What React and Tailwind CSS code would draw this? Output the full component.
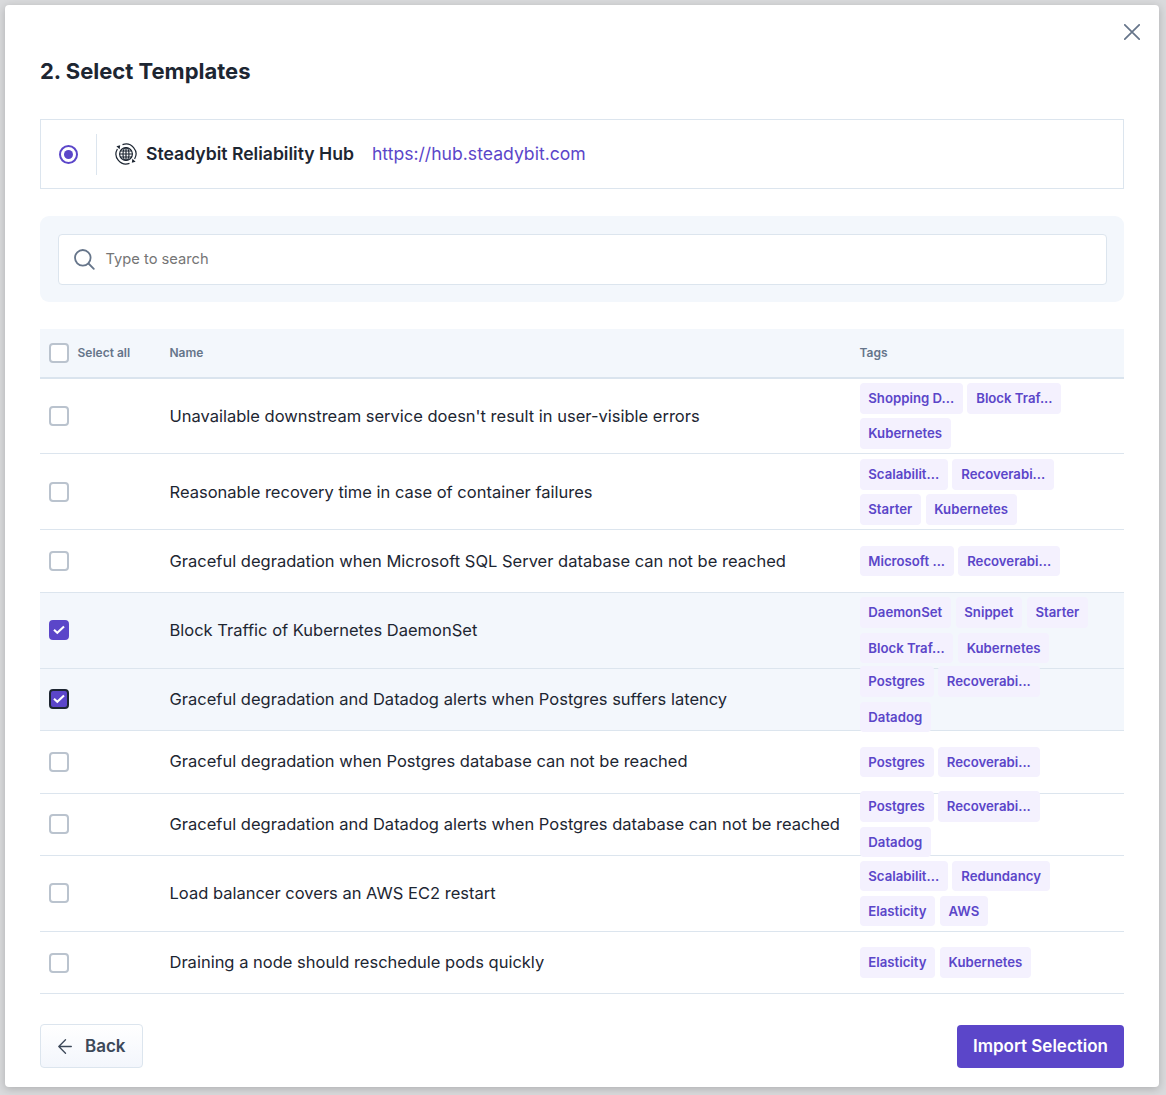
import React from "react";

const rows = [
  { name: "Unavailable downstream service doesn't result in user-visible errors", tags: ["Shopping D...", "Block Traf...", "Kubernetes"], h: "h-[75.8px]" },
  { name: "Reasonable recovery time in case of container failures", tags: ["Scalabilit...", "Recoverabi...", "Starter", "Kubernetes"], h: "h-[75.8px]" },
  { name: "Graceful degradation when Microsoft SQL Server database can not be reached", tags: ["Microsoft ...", "Recoverabi..."], h: "h-[62.5px]" },
  { name: "Block Traffic of Kubernetes DaemonSet", tags: ["DaemonSet", "Snippet", "Starter", "Block Traf...", "Kubernetes"], h: "h-[75.8px]", checked: true },
  { name: "Graceful degradation and Datadog alerts when Postgres suffers latency", tags: ["Postgres", "Recoverabi...", "Datadog"], h: "h-[62.5px]", checked: true, focused: true },
  { name: "Graceful degradation when Postgres database can not be reached", tags: ["Postgres", "Recoverabi..."], h: "h-[62.5px]" },
  { name: "Graceful degradation and Datadog alerts when Postgres database can not be reached", tags: ["Postgres", "Recoverabi...", "Datadog"], h: "h-[62.5px]" },
  { name: "Load balancer covers an AWS EC2 restart", tags: ["Scalabilit...", "Redundancy", "Elasticity", "AWS"], h: "h-[75.8px]" },
  { name: "Draining a node should reschedule pods quickly", tags: ["Elasticity", "Kubernetes"], h: "h-[62.5px]" },
];

function Checkbox({ checked, focused }) {
  if (!checked) return <span className="block h-5 w-5 shrink-0 rounded-[4px] border-2 border-[#bac3ce] bg-white" />;
  return (
    <span className={"flex h-5 w-5 shrink-0 items-center justify-center rounded-[4px] border-2 bg-[#5b46c9] " + (focused ? "border-[#1d2632]" : "border-[#5b46c9]")}>
      <svg width="12" height="10" viewBox="0 0 12 10" fill="none" stroke="white" strokeWidth="2.1">
        <path d="M1 4.8 4.3 7.8 11 1.6" />
      </svg>
    </span>
  );
}

function HubIcon() {
  return (
    <svg width="22" height="22" viewBox="0 0 22 22" fill="none" stroke="#1d2632" strokeWidth="1.2">
      <circle cx="11" cy="11" r="6.4" />
      <ellipse cx="11" cy="11" rx="3" ry="6.4" />
      <path d="M11 4.6v12.8M4.6 11h12.8M5.5 8h11M5.5 14h11" />
      <path d="M7.5 1.6A10 10 0 0 1 19.6 16M14.5 20.4A10 10 0 0 1 2.4 6" />
      <path d="M1.4 3.2 5.2 2.2 4.6 6.2ZM20.6 18.8 16.8 19.8 17.4 15.8Z" fill="#1d2632" stroke="none" />
    </svg>
  );
}

export default function App() {
  return (
    <div className="flex h-[1095px] w-[1166px] overflow-hidden bg-[#d9dadc] pl-[5px] pt-[5px] font-['Inter',sans-serif] text-[#1d2632]">
      <main className="relative h-[1082px] w-[1154px] shrink-0 rounded-[4px] bg-white px-[35px] shadow-[0_2px_8px_rgba(0,0,0,0.2)]">
        <button className="absolute right-[19px] top-[19px]">
          <svg className="block" width="16" height="16" viewBox="0 0 16 16" stroke="#66758a" strokeWidth="1.7" strokeLinecap="round"><path d="M.8.8 15.2 15.2M15.2.8.8 15.2" /></svg>
        </button>
        <h1 className="pt-[51px] text-[22px] font-bold leading-[30px]">2. Select Templates</h1>
        <section className="mt-[33px] flex h-[70px] w-[1084px] items-center border border-[#dce5ee] pl-[18px]">
          <span className="flex h-[19px] w-[19px] items-center justify-center rounded-full border-2 border-[#5b46c9]"><span className="h-[9px] w-[9px] rounded-full bg-[#5b46c9]" /></span>
          <span className="ml-[18px] mr-[18px] h-[41px] w-px bg-[#dce5ee]" />
          <HubIcon />
          <span className="ml-[9px] text-[17.6px] font-semibold">Steadybit Reliability Hub</span>
          <a className="ml-[18px] text-[17.6px] text-[#5b46c9]">https://hub.steadybit.com</a>
        </section>
        <section className="mt-[27px] h-[86px] w-[1084px] rounded-[9px] bg-[#f3f7fc] p-[17.5px]">
          <div className="flex h-[51px] items-center rounded-[4px] border border-[#dce5ee] bg-white pl-[15px]">
            <svg width="21" height="21" viewBox="0 0 21 21" fill="none" stroke="#66758a" strokeWidth="1.8" strokeLinecap="round"><circle cx="8.8" cy="8.8" r="7.8" /><path d="m14.5 14.5 5.3 5.3" /></svg>
            <span className="ml-[11px] text-[14.7px] text-[#757575]">Type to search</span>
          </div>
        </section>
        <section className="mt-[27px] w-[1084px]">
          <div className="flex h-[49.7px] items-center border-b-2 border-[#dae4ee] bg-[#f3f7fc] text-[12px] font-semibold text-[#66758a]">
            <div className="flex w-[129.5px] items-center gap-[8.5px] pl-[9px]"><Checkbox />Select all</div>
            <div className="w-[690px]">Name</div>
            <div>Tags</div>
          </div>
          {rows.map((r) => (
            <div key={r.name} className={"flex items-center border-b border-[#dce5ee] " + r.h + (r.checked ? " bg-[#f3f7fc]" : "")}>
              <div className="w-[129.5px] pl-[9px]"><Checkbox checked={r.checked} focused={r.focused} /></div>
              <div className="w-[690px] whitespace-nowrap text-[16.5px]">{r.name}</div>
              <div className="flex w-[256px] flex-wrap gap-x-[4.5px] gap-y-[4.7px]">
                {r.tags.map((t) => <span key={t} className="h-[30.5px] whitespace-nowrap rounded-[4px] bg-[#f4f1fe] px-[8.8px] text-[13.2px] font-semibold leading-[30.5px] text-[#5b46c9]">{t}</span>)}
              </div>
            </div>
          ))}
        </section>
        <footer className="mt-[30px] flex w-[1084px] items-center justify-between text-[17px] font-semibold">
          <button className="flex h-[44px] w-[103px] items-center rounded-[4px] border border-[#dce5ee] bg-linear-to-b from-white to-[#f3f6fc] pl-[17px] text-[#3c4859]">
            <svg width="14" height="15" viewBox="0 0 14 15" fill="none" stroke="#3c4859" strokeWidth="1.3" strokeLinecap="round" strokeLinejoin="round"><path d="M13.3 7.5H.8M7.5.8.8 7.5l6.7 6.7" /></svg>
            <span className="ml-[13px]">Back</span>
          </button>
          <button className="h-[43px] w-[167px] rounded-[4px] bg-[#5b46c9] text-white">Import Selection</button>
        </footer>
      </main>
    </div>
  );
}
